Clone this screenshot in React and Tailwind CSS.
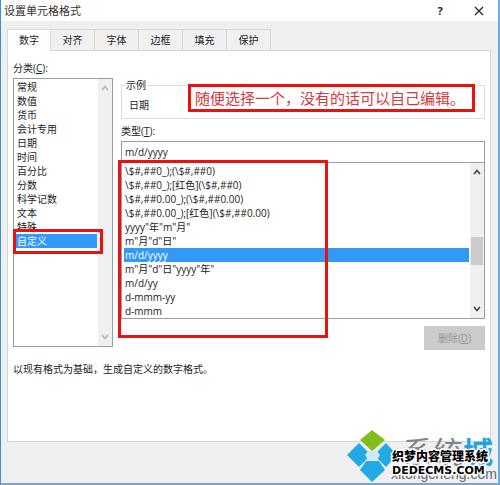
import { useState } from "react";

const tabs = ["数字", "对齐", "字体", "边框", "填充", "保护"];

const categories = [
  "常规",
  "数值",
  "货币",
  "会计专用",
  "日期",
  "时间",
  "百分比",
  "分数",
  "科学记数",
  "文本",
  "特殊",
  "自定义",
];

const formats = [
  "\\$#,##0_);(\\$#,##0)",
  "\\$#,##0_);[红色](\\$#,##0)",
  "\\$#,##0.00_);(\\$#,##0.00)",
  "\\$#,##0.00_);[红色](\\$#,##0.00)",
  'yyyy"年"m"月"',
  'm"月"d"日"',
  "m/d/yyyy",
  'm"月"d"日"yyyy"年"',
  "m/d/yy",
  "d-mmm-yy",
  "d-mmm",
];

function Chevron({ down }) {
  return (
    <svg viewBox="0 0 8 6" className="w-2 h-1.5" fill="none" stroke="currentColor" strokeWidth="1.6">
      <path d={down ? "M1 1l3 3.5L7 1" : "M1 5l3-3.5L7 5"} />
    </svg>
  );
}

function ListBox({ labelId, items, value, onChange }) {
  return (
    <ul role="listbox" aria-labelledby={labelId} className="flex-1 min-w-0 pt-px pl-0.5 pr-px">
      {items.map((item) => (
        <li
          key={item}
          role="option"
          aria-selected={item === value}
          onClick={() => onChange(item)}
          className={
            item === value
              ? "h-3.5 leading-[14px] pl-px whitespace-nowrap bg-[#3399f8] text-white"
              : "h-3.5 leading-[14px] pl-px whitespace-nowrap"
          }
        >
          {item}
        </li>
      ))}
    </ul>
  );
}

function Watermark() {
  return (
    <div className="absolute right-1 bottom-0 w-[148px] h-[54px]">
      <svg viewBox="0 0 52 54" className="absolute left-0 top-0 w-[52px] h-[54px]">
        <path d="M26 1l13 10-13 11-12-11z" fill="#84bd1e" />
        <path d="M13 14l12 12-12 12L1 26z" fill="#23aae4" />
        <path d="M40 14l11 12-11 12-12-12z" fill="#23aae4" />
        <path d="M20 32h13l6 9-13 12-12-12z" fill="#23aae4" />
        <path d="M22 22h9l3 4-3 5h-9l-3-5z" fill="#cfe9f4" />
      </svg>
      <div className="absolute left-[57px] top-[7px] text-[30px] leading-8 whitespace-nowrap text-[#7f8588]">
        系统<span className="font-bold text-[#1fa5e3]">城</span>
      </div>
      <div className="absolute left-[45px] top-[37px] text-[14px] leading-4 text-[#66696b] font-['Liberation_Sans','Noto_Sans_CJK_SC',sans-serif]">
        xitongcheng.com
      </div>
      <div className="absolute left-[46px] top-5 text-[12px] leading-4 font-black whitespace-nowrap text-black [-webkit-text-stroke:3px_white] [paint-order:stroke_fill]">
        织梦内容管理系统
      </div>
      <div className="absolute left-[46px] top-[34px] text-[11px] leading-4 font-bold whitespace-nowrap text-black [-webkit-text-stroke:3px_white] [paint-order:stroke_fill] font-['DejaVu_Sans',sans-serif]">
        DEDECMS.COM
      </div>
    </div>
  );
}

export default function App() {
  const [tab, setTab] = useState("数字");
  const [category, setCategory] = useState("自定义");
  const [format, setFormat] = useState("m/d/yyyy");

  return (
    <div className="relative min-h-screen flex flex-col bg-[#efefef] border-l border-r-2 border-b-2 border-l-[#3b8fd2] border-r-[#63b0e8] border-b-[#7fa3c4] text-[10px] text-[#222] font-['Open_Sans','Noto_Sans_CJK_SC',sans-serif]">
      <header className="h-[21px] flex items-center bg-white pl-[3px] pr-3.5">
        <h1 className="flex-1 text-[11px] leading-4 text-[#333]">设置单元格格式</h1>
        <button aria-label="帮助" className="w-3 mr-7 text-[11px] leading-4 font-bold">
          ?
        </button>
        <button aria-label="关闭">
          <svg viewBox="0 0 10 10" className="w-2.5 h-2.5" stroke="#222" strokeWidth="1.2">
            <path d="M1 1l8 8M9 1L1 9" />
          </svg>
        </button>
      </header>

      <div className="pt-2 pl-1.5 pr-[7px]">
        <div role="tablist" className="flex">
          {tabs.map((name) => (
            <button
              key={name}
              role="tab"
              aria-selected={name === tab}
              onClick={() => setTab(name)}
              className={
                name === tab
                  ? "relative z-10 w-11 h-[22px] -mb-px bg-white border-l border-t border-r border-[#dcdcdc]"
                  : "w-11 h-[21px] bg-[#f0f0f0] border-t border-r border-[#d5d5d5]"
              }
            >
              {name}
            </button>
          ))}
        </div>

        <main className="bg-white border border-[#d5d5d5] pt-2.5 pl-[5px] pr-[5px] pb-[65px]">
          <div className="flex gap-2">
            <section className="w-[100px] flex flex-col pb-1.5">
              <div id="category-label" className="h-[17px] leading-[14px]">
                分类(<u>C</u>):
              </div>
              <div className="relative flex-1 flex border border-[#9a9da3]">
                <ListBox labelId="category-label" items={categories} value={category} onChange={setCategory} />
                <div className="w-3.5 flex flex-col items-center justify-between py-1.5 bg-[#f0f0f0] text-[#b5b5b5]">
                  <Chevron />
                  <Chevron down />
                </div>
                <div className="absolute -left-px top-[150px] w-[90px] h-[25px] border-3 border-[#ea1111] pointer-events-none" />
              </div>
            </section>

            <section className="flex-1 min-w-0 pt-[17px]">
              <div className="relative">
                <fieldset className="border border-[#dcdcdc] h-[41px] px-[3px]">
                  <legend className="px-px leading-[14px]">示例</legend>
                  <p className="pl-1 pt-1.5 leading-[14px]">日期</p>
                </fieldset>
                <div className="absolute right-2.5 top-[6px] w-[287px] h-7 flex items-center pl-1 border-3 border-[#ea1111] bg-white text-[15px] leading-5 whitespace-nowrap text-[#d9363e]">
                  随便选择一个，没有的话可以自己编辑。
                </div>
              </div>

              <label htmlFor="format" className="block h-[22px] pt-[5px] leading-[14px]">
                类型(<u>T</u>):
              </label>
              <input
                id="format"
                value={format}
                onChange={(e) => setFormat(e.target.value)}
                className="block w-full h-[22px] px-[3px] bg-white border border-[#9a9da3] outline-none"
              />
              <div className="relative -mt-px flex border border-[#9a9da3]">
                <ListBox labelId="format" items={formats} value={format} onChange={setFormat} />
                <div className="w-3.5 flex flex-col items-center justify-between py-1.5 bg-[#f0f0f0] text-[#444]">
                  <Chevron />
                  <div className="w-3 h-7 mt-5 bg-[#cbcbcb]" />
                  <Chevron down />
                </div>
                <div className="absolute -left-1 -top-[3px] w-[210px] h-[178px] border-3 border-[#ea1111] pointer-events-none" />
              </div>

              <div className="flex justify-end pt-[7px] pb-[3px]">
                <button disabled className="w-[61px] h-6 bg-[#cbcbcb] text-[#999]">
                  删除(<u>D</u>)
                </button>
              </div>
            </section>
          </div>

          <p className="pt-[9px] leading-[14px]">以现有格式为基础，生成自定义的数字格式。</p>
        </main>
      </div>

      <Watermark />
    </div>
  );
}
